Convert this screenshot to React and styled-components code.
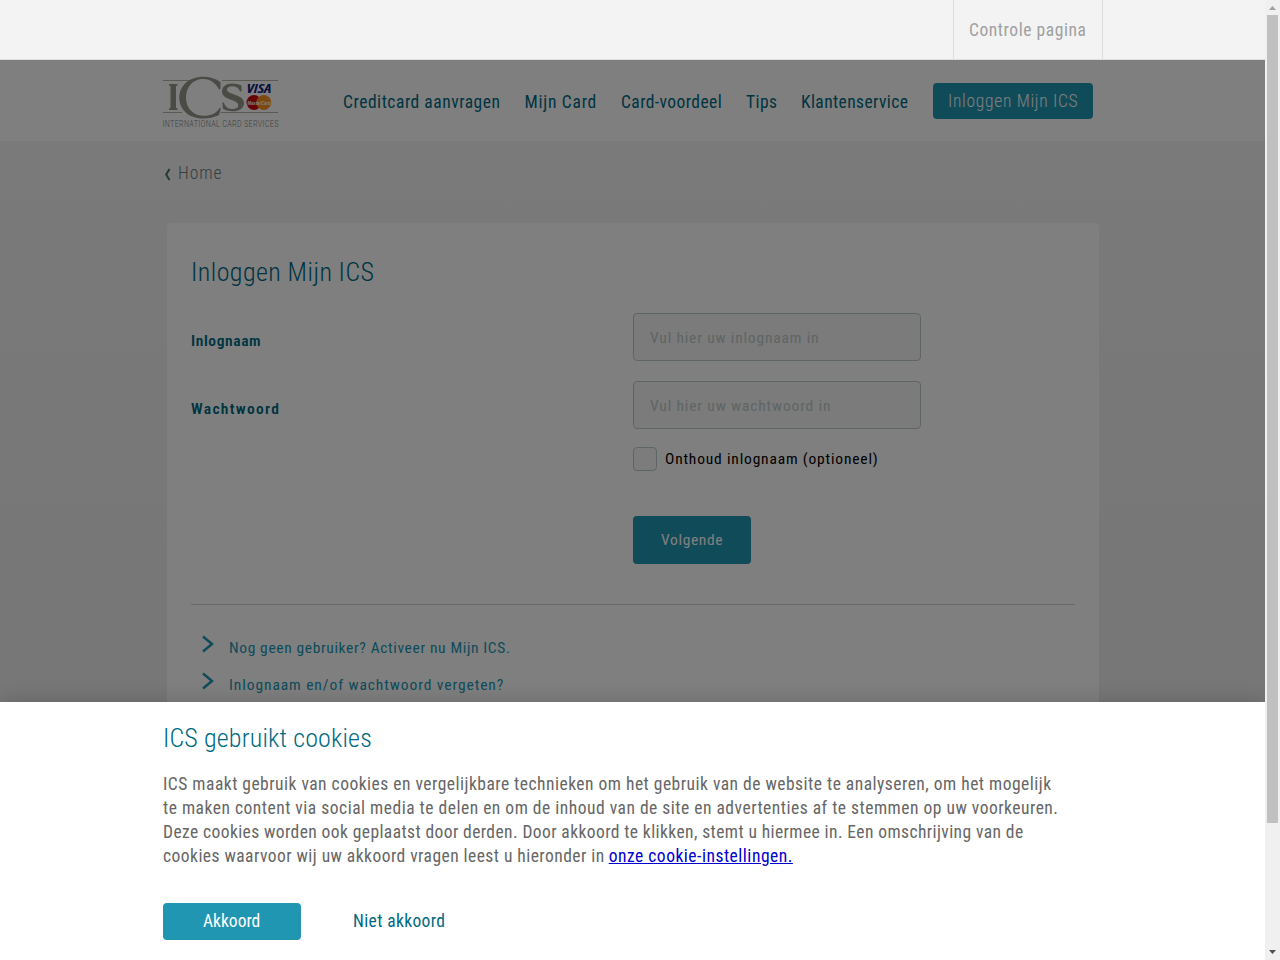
import React from "react";
import styled, { createGlobalStyle } from "styled-components";

const Global = createGlobalStyle`
  * { box-sizing: border-box; }
  body { margin: 0; background: #fff; overflow: hidden; }
  a { text-decoration: none; color: inherit; }
`;

const Window = styled.div`
  display: flex;
  width: 1280px;
  height: 960px;
  font-family: Roboto, "Open Sans", sans-serif;
  font-stretch: 75%;
  overflow: hidden;
`;

const Text = styled.span`
  white-space: nowrap;
  letter-spacing: ${(p) => p.$ls || 0}px;
`;

const Viewport = styled.div`
  position: relative;
  display: flex;
  flex-direction: column;
  width: 1265px;
  height: 960px;
  background: linear-gradient(#f6f6f6, #f0efef 560px);
  overflow: hidden;
`;

const TopBar = styled.div`
  position: relative;
  z-index: 2;
  flex: none;
  display: flex;
  justify-content: flex-end;
  height: 60px;
  padding-right: 162px;
  background: #f3f3f3;
  border-bottom: 1px solid #ddd;
`;

const TopItem = styled.a`
  display: flex;
  width: 150px;
  padding: 18px 0 0 15px;
  border: solid #ddd;
  border-width: 0 1px;
  font-size: 17.5px;
  line-height: 24px;
  color: #a0a0a0;
`;

const Header = styled.header`
  flex: none;
  display: flex;
  height: 81px;
  padding: 16px 172px 0 162px;
  background: #fff;
`;

const Logo = styled.svg`
  flex: none;
  width: 117px;
  height: 54px;
`;

const Nav = styled.nav`
  display: flex;
  margin-left: 64px;
  padding-top: 14px;
  font-size: 17.5px;
  line-height: 24px;
  color: #006983;
`;

const NavItem = styled.a`
  flex: none;
  width: ${(p) => p.$w}px;
`;

const LoginButton = styled.a`
  flex: none;
  width: 160px;
  height: 36px;
  margin-top: 7px;
  padding-left: 15px;
  border-radius: 4px;
  background: #2196b3;
  color: #fff;
  font-size: 17.5px;
  font-weight: 300;
  line-height: 36px;
`;

const Breadcrumb = styled.div`
  flex: none;
  display: flex;
  align-items: center;
  gap: 7px;
  height: 82px;
  padding: 0 0 18px 164px;
  color: #69807f;
  font-size: 17.5px;
  font-weight: 300;
`;

const BackIcon = styled.svg`
  width: 7px;
  height: 13px;
  margin-top: 2px;
`;

const Card = styled.main`
  flex: none;
  width: 932px;
  height: 700px;
  margin-left: 167px;
  padding: 0 24px;
  border-radius: 4px;
  background: #fff;
`;

const Title = styled.h1`
  margin: 0;
  font-size: 26px;
  font-weight: 300;
  line-height: 34px;
  color: #006983;
`;

const CardTitle = styled(Title)`
  padding: 32px 0 24px;
`;

const FormRow = styled.div`
  display: grid;
  grid-template-columns: 442px 288px;
  height: 48px;
  margin-bottom: 20px;
`;

const Label = styled.label`
  padding-top: 16px;
  font-size: 15.5px;
  font-weight: 600;
  line-height: 24px;
  color: #006983;
`;

const Field = styled.div`
  height: 48px;
  padding-left: 16px;
  border: 1px solid #bccbca;
  border-radius: 4px;
  background: #f6f6f6;
  color: #bccbca;
  font-size: 15.5px;
  line-height: 48px;
`;

const CheckRow = styled.div`
  display: flex;
  align-items: center;
  gap: 8px;
  height: 24px;
  margin: -2px 0 0 442px;
  font-size: 15.5px;
  color: #000;
`;

const Checkbox = styled.span`
  width: 24px;
  height: 24px;
  border: 1px solid #bccbca;
  border-radius: 4px;
  background: #f8f8f8;
`;

const Submit = styled.div`
  width: 118px;
  height: 48px;
  margin: 45px 0 40px 442px;
  padding-left: 28px;
  border-radius: 4px;
  background: #2196b3;
  color: #fff;
  font-size: 15.5px;
  line-height: 48px;
`;

const Links = styled.div`
  padding: 30px 0 0 11px;
  border-top: 1px solid #d0d0d0;
  color: #2196b3;
  font-size: 15.5px;
`;

const LinkRow = styled.a`
  display: flex;
  gap: 15px;
  height: 37px;
  line-height: 26px;
`;

const Chevron = styled.svg`
  width: 12px;
  height: 18px;
`;

const Overlay = styled.div`
  position: absolute;
  inset: 0;
  z-index: 1;
  background: rgba(0, 0, 0, 0.5);
`;

const CookieBar = styled.section`
  position: absolute;
  z-index: 3;
  left: 0;
  right: 0;
  bottom: 0;
  height: 258px;
  padding: 19px 0 0 163px;
  background: #fff;
  box-shadow: 0 0 20px rgba(0, 0, 0, 0.18);
`;

const CookieText = styled.p`
  display: flex;
  flex-direction: column;
  align-items: flex-start;
  margin: 17px 0 0;
  font-size: 17.5px;
  line-height: 24px;
  color: #666;
`;

const InlineLink = styled(Text)`
  color: #0000d0;
  text-decoration: underline;
`;

const Actions = styled.div`
  display: flex;
  align-items: center;
  margin-top: 35px;
  font-size: 17.5px;
  line-height: 37px;
  color: #006983;
`;

const Accept = styled.div`
  width: 138px;
  height: 37px;
  margin-right: 52px;
  padding-left: 40px;
  border-radius: 4px;
  background: #2196b3;
  color: #fff;
`;

const Scrollbar = styled.div`
  display: flex;
  flex-direction: column;
  align-items: center;
  width: 15px;
  height: 960px;
  background: #f0f0f0;
`;

const Thumb = styled.div`
  width: 11px;
  height: 808px;
  margin-bottom: 122px;
  background: #c0c0c0;
`;

const Arrow = styled.svg`
  flex: none;
  width: 15px;
  height: 15px;
`;

const NAV = [
  { label: "Creditcard aanvragen", width: 181.5, spacing: 0.53 },
  { label: "Mijn Card", width: 96.5, spacing: 0.74 },
  { label: "Card-voordeel", width: 125, spacing: 0.42 },
  { label: "Tips", width: 55, spacing: 0.4 },
  { label: "Klantenservice", width: 132, spacing: 0.4 },
];

const LINKS = [
  { label: "Nog geen gebruiker? Activeer nu Mijn ICS.", spacing: 0.63 },
  { label: "Inlognaam en/of wachtwoord vergeten?", spacing: 0.92 },
];

function IcsLogo() {
  return (
    <Logo viewBox="0 0 117 54">
      <g stroke="#b4b4aa" strokeWidth="1">
        <path d="M1 4.500H30M60 4.500H116M1 36.500H20M59 36.500H116" />
      </g>
      <g fill="#96968c">
        <path d="M7 8h8.500v1.500l-1.500.6v21.800l1.500.6v1.500h-8.500v-1.500l1.500-.6V10.100L7 9.500z" />
        <path d="M58.500 6v7l-1.500.5C53.500 6 47 3 41 3 31 3 24 11 24 21.500S31 39.800 42 39.800c7 0 12-2.300 15.500-7.800l1.500.5-2 6.500c-5 2.500-10 3.500-16 3.500C26 42.500 17.300 33 17.300 21.500S27 .7 41 .7c7 0 13 2 17.500 5.300z" />
        <path d="M79.500 9.500v6H78c-1-3.500-4-5.300-8-5.300-3 0-5 1.300-5 3.300 0 5.500 17 4.500 17 13.500 0 5.500-5 8.300-11.500 8.300-4 0-7-1-9.500-2.500l-.7-6.300h1.500c1.500 4.500 4.500 6.500 8.500 6.500 3.800 0 6-1.300 6-3.800 0-6-16.300-4.700-16.300-13.700C60 10.500 64 7.500 70 7.500c4 0 7 .8 9.500 2z" />
      </g>
      <text x="84.500" y="16.500" fontFamily="Open Sans" fontSize="12" fontWeight="700" fontStyle="italic" fill="#10207c" textLength="25" lengthAdjust="spacingAndGlyphs">VISA</text>
      <circle cx="92" cy="26.500" r="7.500" fill="#d00810" />
      <circle cx="101.800" cy="26.500" r="7.500" fill="#f69323" />
      <text x="85.500" y="28.500" fontFamily="Liberation Sans" fontSize="5.800" fontWeight="700" fontStyle="italic" fill="#fff" textLength="23" lengthAdjust="spacingAndGlyphs">MasterCard</text>
      <text x="0.500" y="50.700" fontSize="8.300" fontWeight="300" fill="#84847c" textLength="116">INTERNATIONAL CARD SERVICES</text>
    </Logo>
  );
}

export default function App() {
  return (
    <Window>
      <Global />
      <Viewport>
        <TopBar>
          <TopItem><Text $ls={0.56}>Controle pagina</Text></TopItem>
        </TopBar>
        <Header>
          <IcsLogo />
          <Nav>
            {NAV.map((item) => (
              <NavItem key={item.label} $w={item.width}>
                <Text $ls={item.spacing}>{item.label}</Text>
              </NavItem>
            ))}
          </Nav>
          <LoginButton><Text $ls={0.69}>Inloggen Mijn ICS</Text></LoginButton>
        </Header>
        <Breadcrumb>
          <BackIcon viewBox="0 0 7 13">
            <path d="M5.500 1L2.200 6.500 5.500 12" fill="none" stroke="#4e706e" strokeWidth="2" />
          </BackIcon>
          <Text $ls={0.9}>Home</Text>
        </Breadcrumb>
        <Card>
          <CardTitle><Text $ls={0.43}>Inloggen Mijn ICS</Text></CardTitle>
          <FormRow>
            <Label><Text $ls={0.6}>Inlognaam</Text></Label>
            <Field><Text $ls={0.83}>Vul hier uw inlognaam in</Text></Field>
          </FormRow>
          <FormRow>
            <Label><Text $ls={1.32}>Wachtwoord</Text></Label>
            <Field><Text $ls={0.85}>Vul hier uw wachtwoord in</Text></Field>
          </FormRow>
          <CheckRow>
            <Checkbox />
            <Text $ls={0.82}>Onthoud inlognaam (optioneel)</Text>
          </CheckRow>
          <Submit><Text $ls={0.65}>Volgende</Text></Submit>
          <Links>
            {LINKS.map((link) => (
              <LinkRow key={link.label}>
                <Chevron viewBox="0 0 12 18">
                  <path d="M1 1.500L10 9 1 16.500" fill="none" stroke="#2196b3" strokeWidth="2.500" />
                </Chevron>
                <Text $ls={link.spacing}>{link.label}</Text>
              </LinkRow>
            ))}
          </Links>
        </Card>
        <Overlay />
        <CookieBar>
          <Title as="h2"><Text $ls={0.16}>ICS gebruikt cookies</Text></Title>
          <CookieText>
            <Text $ls={0.49}>ICS maakt gebruik van cookies en vergelijkbare technieken om het gebruik van de website te analyseren, om het mogelijk</Text>
            <Text $ls={0.505}>te maken content via social media te delen en om de inhoud van de site en advertenties af te stemmen op uw voorkeuren.</Text>
            <Text $ls={0.41}>Deze cookies worden ook geplaatst door derden. Door akkoord te klikken, stemt u hiermee in. Een omschrijving van de</Text>
            <span>
              <Text $ls={0.46}>cookies waarvoor wij uw akkoord vragen leest u hieronder in</Text>{" "}
              <InlineLink as="a" $ls={0.51}>onze cookie-instellingen.</InlineLink>
            </span>
          </CookieText>
          <Actions>
            <Accept><Text $ls={0}>Akkoord</Text></Accept>
            <Text $ls={0.38}>Niet akkoord</Text>
          </Actions>
        </CookieBar>
      </Viewport>
      <Scrollbar>
        <Arrow viewBox="0 0 15 15"><path d="M4 10h7L7.500 6z" fill="#a0a0a0" /></Arrow>
        <Thumb />
        <Arrow viewBox="0 0 15 15"><path d="M4 5h7L7.500 9z" fill="#505050" /></Arrow>
      </Scrollbar>
    </Window>
  );
}
